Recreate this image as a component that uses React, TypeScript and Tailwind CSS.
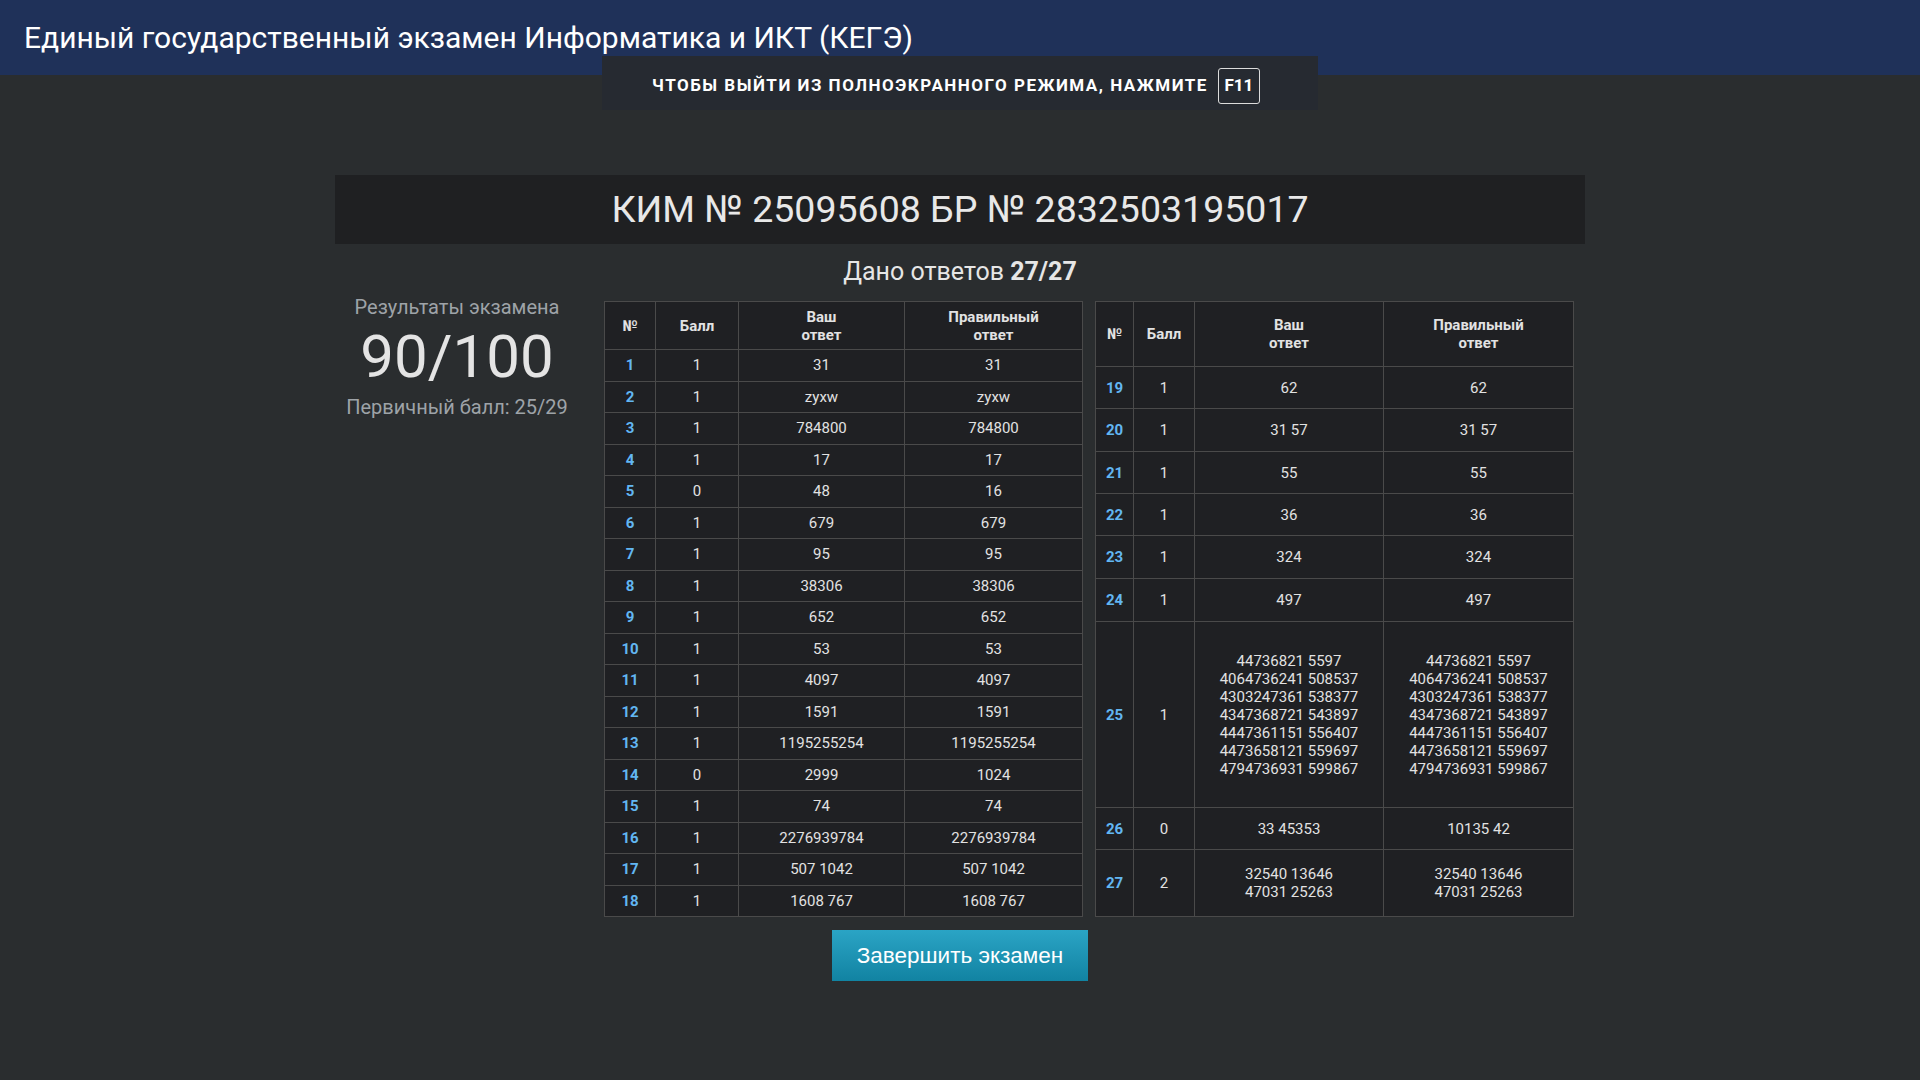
import React from "react";

type Row = { n: number; b: string; a: string; c: string; h: string };

const leftRows: Row[] = [
  ["1", "1", "31", "31"],
  ["2", "1", "zyxw", "zyxw"],
  ["3", "1", "784800", "784800"],
  ["4", "1", "17", "17"],
  ["5", "0", "48", "16"],
  ["6", "1", "679", "679"],
  ["7", "1", "95", "95"],
  ["8", "1", "38306", "38306"],
  ["9", "1", "652", "652"],
  ["10", "1", "53", "53"],
  ["11", "1", "4097", "4097"],
  ["12", "1", "1591", "1591"],
  ["13", "1", "1195255254", "1195255254"],
  ["14", "0", "2999", "1024"],
  ["15", "1", "74", "74"],
  ["16", "1", "2276939784", "2276939784"],
  ["17", "1", "507 1042", "507 1042"],
  ["18", "1", "1608 767", "1608 767"],
].map(([n, b, a, c]) => ({ n: Number(n), b, a, c, h: "h-[31.5px]" }));

const big =
  "44736821 5597\n4064736241 508537\n4303247361 538377\n4347368721 543897\n4447361151 556407\n4473658121 559697\n4794736931 599867";

const rightRows: Row[] = [
  { n: 19, b: "1", a: "62", c: "62", h: "h-[42px]" },
  { n: 20, b: "1", a: "31 57", c: "31 57", h: "h-[43px]" },
  { n: 21, b: "1", a: "55", c: "55", h: "h-[42px]" },
  { n: 22, b: "1", a: "36", c: "36", h: "h-[42px]" },
  { n: 23, b: "1", a: "324", c: "324", h: "h-[43px]" },
  { n: 24, b: "1", a: "497", c: "497", h: "h-[43px]" },
  { n: 25, b: "1", a: big, c: big, h: "h-[186px]" },
  { n: 26, b: "0", a: "33 45353", c: "10135 42", h: "h-[42px]" },
  { n: 27, b: "2", a: "32540 13646\n47031 25263", c: "32540 13646\n47031 25263", h: "h-[67px]" },
];

const cell = "border border-[#4a4a4a] text-center align-middle p-0";

function ResultTable({
  rows,
  widths,
  headH,
}: {
  rows: Row[];
  widths: string[];
  headH: string;
}) {
  return (
    <table className="w-[478px] table-fixed border-collapse bg-[#1f2023] text-[15px] leading-[18px] text-[#e2e2e2]">
      <colgroup>
        {widths.map((w, i) => (
          <col key={i} className={w} />
        ))}
      </colgroup>
      <thead>
        <tr className={headH}>
          <th className={`${cell} font-bold`}>№</th>
          <th className={`${cell} font-bold`}>Балл</th>
          <th className={`${cell} font-bold`}>
            Ваш
            <br />
            ответ
          </th>
          <th className={`${cell} font-bold`}>
            Правильный
            <br />
            ответ
          </th>
        </tr>
      </thead>
      <tbody>
        {rows.map((r) => (
          <tr key={r.n} className={r.h}>
            <td className={`${cell} font-bold text-[#62b6f2]`}>{r.n}</td>
            <td className={cell}>{r.b}</td>
            <td className={`${cell} whitespace-pre-line`}>{r.a}</td>
            <td className={`${cell} whitespace-pre-line`}>{r.c}</td>
          </tr>
        ))}
      </tbody>
    </table>
  );
}

export default function App() {
  return (
    <div
      className="relative min-h-[1080px] w-full bg-[#2a2d2f] text-[#e6e6e6]"
      style={{ fontFamily: "Roboto, 'Noto Sans', sans-serif" }}
    >
      <header className="flex h-[75px] items-center bg-[#1f3159] pl-[24px]">
        <h1 className="text-[30px] font-normal text-white">
          Единый государственный экзамен Информатика и ИКТ (КЕГЭ)
        </h1>
      </header>

      <div className="absolute left-[602px] top-[56px] flex h-[54px] w-[716px] items-center justify-center gap-[10px] bg-[#262a31] pr-[8px] pt-[5px]">
        <span className="text-[17px] font-bold uppercase tracking-[1.5px] text-white">
          Чтобы выйти из полноэкранного режима, нажмите
        </span>
        <span className="flex h-[36px] w-[42px] items-center justify-center rounded-[3px] border border-[#dcdcdc] text-[17px] font-bold text-white">
          F11
        </span>
      </div>

      <main className="mx-auto w-[1250px] pt-[100px]">
        <div className="flex h-[69px] items-center justify-center bg-[#1f2022]">
          <span className="text-[37.5px] text-[#e8e8e8]">
            КИМ № 25095608 БР № 2832503195017
          </span>
        </div>

        <div className="mt-[12px] text-center text-[25px] leading-[32px] text-[#e6e6e6]">
          Дано ответов <span className="font-bold">27/27</span>
        </div>

        <div className="mt-[13px] flex items-start">
          <div className="-mt-[5px] flex w-[244px] flex-col items-center">
            <div className="text-[20px] leading-[22px] text-[#9ea3a8]">
              Результаты экзамена
            </div>
            <div className="mt-[9px] text-[60px] leading-[60px] text-[#e4e4e4]">
              90/100
            </div>
            <div className="mt-[9px] text-[20px] leading-[22px] text-[#9ea3a8]">
              Первичный балл: 25/29
            </div>
          </div>

          <div className="ml-[25px] flex gap-[12px]">
            <ResultTable
              rows={leftRows}
              widths={["w-[51px]", "w-[83px]", "w-[166px]", "w-[178px]"]}
              headH="h-[48px]"
            />
            <ResultTable
              rows={rightRows}
              widths={["w-[38px]", "w-[61px]", "w-[189px]", "w-[190px]"]}
              headH="h-[65px]"
            />
          </div>
        </div>

        <div className="mt-[13px] flex justify-center">
          <button
            className="h-[51px] w-[256px] bg-gradient-to-b from-[#2aa4c5] to-[#1183a2] text-[22.5px] text-white"
            style={{ fontFamily: "'Liberation Sans', Arial, sans-serif" }}
          >
            Завершить экзамен
          </button>
        </div>
      </main>
    </div>
  );
}
